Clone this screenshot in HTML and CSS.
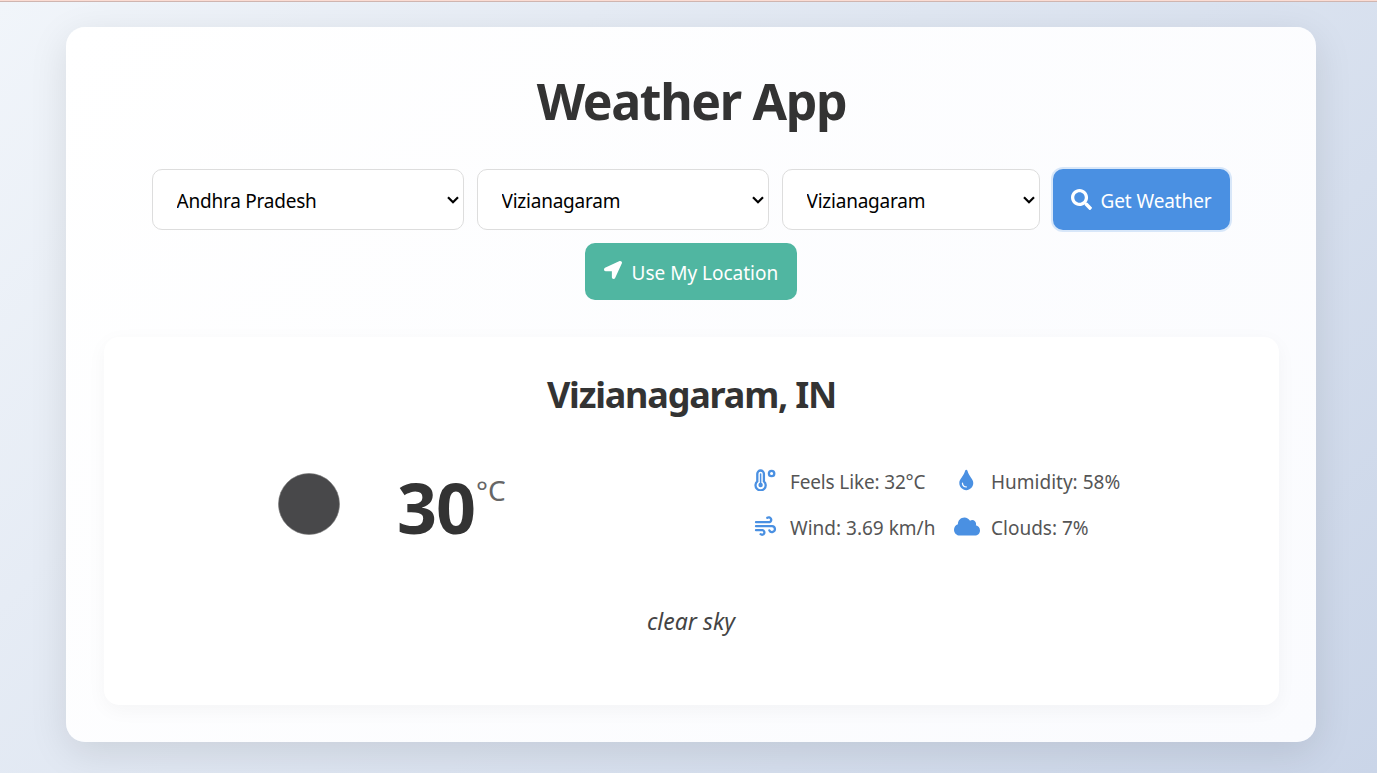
FILE: index.html
```html
<!DOCTYPE html>
<html lang="en">
<head>
<meta charset="utf-8">
<title>Weather App</title>
<link rel="stylesheet" href="styles.css">
</head>
<body>
<main class="container">
  <h1 class="title">Weather App</h1>
  <div class="search">
    <div class="field field-state">
      <select class="select" aria-label="State"><option>Andhra Pradesh</option></select>
      <svg class="chevron" viewBox="0 0 12 8"><path d="M1 1.2 6 6.2 11 1.2"/></svg>
    </div>
    <div class="field field-district">
      <select class="select" aria-label="District"><option>Vizianagaram</option></select>
      <svg class="chevron" viewBox="0 0 12 8"><path d="M1 1.2 6 6.2 11 1.2"/></svg>
    </div>
    <div class="field field-city">
      <select class="select" aria-label="City"><option>Vizianagaram</option></select>
      <svg class="chevron" viewBox="0 0 12 8"><path d="M1 1.2 6 6.2 11 1.2"/></svg>
    </div>
    <button class="button get"><svg class="button-icon" viewBox="0 0 512 512"><path d="M505 442.7L405.3 343c-4.5-4.5-10.6-7-17-7H372c27.6-35.3 44-79.7 44-128C416 93.1 322.9 0 208 0S0 93.1 0 208s93.1 208 208 208c48.3 0 92.7-16.4 128-44v16.3c0 6.4 2.5 12.5 7 17l99.7 99.7c9.4 9.4 24.6 9.4 33.9 0l28.3-28.3c9.4-9.4 9.4-24.6.1-34zM208 336c-70.7 0-128-57.2-128-128 0-70.7 57.2-128 128-128 70.7 0 128 57.2 128 128 0 70.7-57.2 128-128 128z"/></svg><span class="get-label">Get Weather</span></button>
  </div>
  <button class="button locate"><svg class="button-icon arrow" viewBox="0 0 512 512"><path d="M444.52 3.52L28.74 195.42c-47.97 22.39-31.98 92.75 19.19 92.75h175.91v175.91c0 51.17 70.36 67.17 92.75 19.19l191.9-415.78c15.99-38.39-25.59-79.97-63.97-63.97z"/></svg><span class="locate-label">Use My Location</span></button>

  <section class="weather">
    <h2 class="place">Vizianagaram, IN</h2>
    <div class="body">
      <div class="now">
        <svg class="sky" viewBox="0 0 62 62"><circle cx="31" cy="31" r="30.5"/></svg>
        <div class="temp">30</div><div class="unit">°C</div>
      </div>
      <div class="details">
        <svg class="icon" viewBox="0 0 24 22"><path class="line" d="M4.3 12.4V4.8a3.3 3.3 0 0 1 6.6 0v7.6a5.1 5.1 0 1 1-6.6 0Z"/><path class="thin" d="M7.6 5v10"/><circle class="solid" cx="7.6" cy="16" r="2.2"/><circle class="line" cx="18.6" cy="4.5" r="2.7"/></svg>
        <span class="detail feels">Feels Like: 32°C</span>
        <svg class="icon" viewBox="0 0 24 22"><path class="solid" transform="translate(5.3 .8) scale(.0397)" d="M205.22 22.09c-7.94-28.78-49.44-30.12-58.44 0C100.01 179.85 0 222.72 0 333.91 0 432.35 78.72 512 176 512s176-79.65 176-178.09c0-111.75-99.79-153.34-146.78-311.82zM176 448c-61.75 0-112-50.25-112-112 0-8.84 7.16-16 16-16s16 7.16 16 16c0 44.11 35.89 80 80 80 8.84 0 16 7.16 16 16s-7.16 16-16 16z"/></svg>
        <span class="detail humid">Humidity: 58%</span>
        <svg class="icon" viewBox="0 0 24 22"><path class="line" d="M3 7.2h13.6a2.5 2.5 0 1 0-2.3-4.4M3 11.2h16.1a2.9 2.9 0 1 1-2.7 4.2M3 15.2h6.6a2.3 2.3 0 1 1-2 4"/></svg>
        <span class="detail wind">Wind: 3.69 km/h</span>
        <svg class="icon cloud" viewBox="0 0 640 512"><path class="solid" d="M537.6 226.6c4.1-10.7 6.4-22.4 6.4-34.6 0-53-43-96-96-96-19.7 0-38.1 6-53.3 16.2C367 64.2 315.3 32 256 32c-88.4 0-160 71.6-160 160 0 2.7.1 5.4.2 8.1C40.2 219.8 0 273.2 0 336c0 79.5 64.5 144 144 144h368c70.7 0 128-57.3 128-128 0-61.9-44-113.6-102.4-125.4z"/></svg>
        <span class="detail clouds">Clouds: 7%</span>
      </div>
    </div>
    <p class="description">clear sky</p>
  </section>
</main>
</body>
</html>
```

FILE: styles.css
```css
* { box-sizing: border-box; }
body {
  margin: 0;
  height: 773px;
  overflow: hidden;
  padding: 27px 61px 0 66px;
  background:
    linear-gradient(#fbdcd3, #fbdcd3) 0 0 / 100% 1px no-repeat,
    linear-gradient(#cfb5b0, #cfb5b0) 0 1px / 100% 1px no-repeat,
    linear-gradient(135deg, #f1f5fa 0%, #cad5e8 100%);
  font-family: "Noto Sans", sans-serif;
  color: #333;
}
.container {
  width: 1250px;
  height: 715px;
  padding: 37px 37px 37px 38px;
  border-radius: 19px;
  background: linear-gradient(135deg, #fff, #fafbfe);
  box-shadow: 0 10px 38px rgba(0, 0, 0, .1);
  display: flex;
  flex-direction: column;
  align-items: center;
}
.title {
  margin: 0;
  height: 75px;
  line-height: 74px;
  font-size: 50px;
  letter-spacing: -1.35px;
  white-space: nowrap;
}
.search {
  display: grid;
  grid-template-columns: 312px 292px 258px 177px;
  gap: 13px;
  margin-top: 30px;
  margin-right: 2px;
  height: 61px;
}
.field { display: grid; }
.field > * { grid-area: 1 / 1; }
.select {
  appearance: none;
  width: 100%;
  height: 61px;
  margin: 0;
  padding: 2px 24px 0;
  border: 1px solid #ddd;
  border-radius: 10px;
  background: #fff;
  color: #000;
  font: 19px "Noto Sans", sans-serif;
  letter-spacing: -.23px;
}
.chevron {
  width: 12px;
  height: 8px;
  align-self: center;
  justify-self: end;
  margin-right: 5px;
  pointer-events: none;
  fill: none;
  stroke: #000;
  stroke-width: 2.2;
}
.button {
  display: flex;
  align-items: center;
  border: 0;
  padding: 2px 18px 0;
  border-radius: 10px;
  color: #fff;
  font: 19px "Noto Sans", sans-serif;
  white-space: nowrap;
}
.get { height: 61px; background: #4a90e2; box-shadow: 0 0 0 2px #d8e7f9; }
.get-label { letter-spacing: -.1px; }
.button-icon { width: 21px; height: 21px; margin: -3px 9px 0 0; fill: currentColor; flex: none; }
.locate { width: 212px; height: 57px; margin-top: 13px; margin-right: 2px; padding-left: 19px; background: #50b6a1; }
.arrow { width: 18px; height: 18px; margin: -5px 10px 0 0; }
.weather {
  width: 1175px;
  height: 368px;
  margin-top: 37px;
  padding-top: 33px;
  border-radius: 15px;
  background: #fff;
  box-shadow: 0 5px 20px rgba(0, 0, 0, .04);
  text-align: center;
}
.place { margin: 0; font-size: 36px; line-height: 50px; letter-spacing: -1.2px; }
.body { display: flex; justify-content: space-between; padding: 39px 158px 0 174px; height: 145px; }
.now { display: flex; align-items: flex-start; }
.sky { width: 62px; height: 62px; margin: 14px 57px 0 0; fill: #48484a; stroke: #777; stroke-width: .6; }
.temp { width: 79px; font-size: 70px; line-height: 96px; font-weight: 700; letter-spacing: -1px; text-align: left; }
.unit { margin-top: 12px; font-size: 28px; line-height: 38px; color: #666; }
.details {
  display: grid;
  grid-template-columns: 37px 164px 37px 130px;
  grid-template-rows: 46px 46px;
  width: 368px;
  margin-top: 1px;
  text-align: left;
}
.icon { width: 24px; height: 22px; margin-top: 9px; }
.cloud { width: 26px; height: 21px; margin-top: 10px; }
.solid { fill: #4a90e2; }
.line, .thin { fill: none; stroke: #4a90e2; stroke-width: 2.3; stroke-linecap: round; }
.thin { stroke-width: 1.5; }
.detail { color: #555; font-size: 19px; line-height: 44px; white-space: nowrap; }
.feels { letter-spacing: -.15px; }
.description { margin: 40px 1px 0 0; font-size: 23px; line-height: 32px; font-style: italic; color: #444; }
```
